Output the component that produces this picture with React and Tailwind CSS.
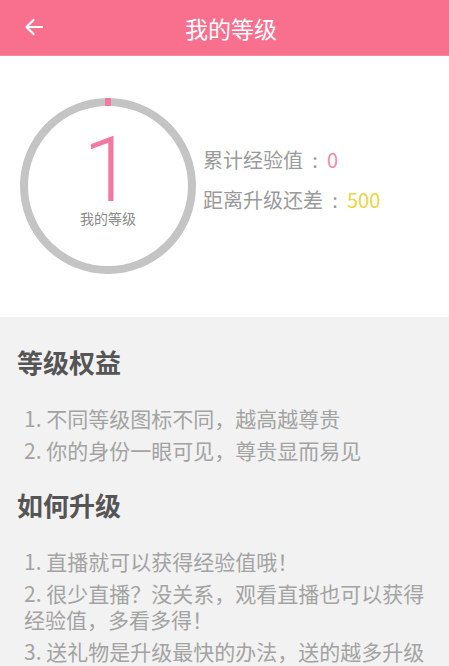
import React from "react";

const font = { fontFamily: '"Noto Sans CJK SC", "Noto Sans", sans-serif' };

function Ring() {
    return (
        <div className="relative w-[180px] h-[180px] shrink-0">
            <svg width="180" height="180" viewBox="0 0 180 180">
                <circle cx="90" cy="90" r="84" fill="none" stroke="#c4c4c4" strokeWidth="8" />
                <line x1="90" y1="2" x2="90" y2="10" stroke="#f27aa0" strokeWidth="6" />
            </svg>
            <div
                className="absolute left-0 right-0 top-[39px] text-center text-[90px] leading-[72px] font-light text-[#f27aa0]"
                style={{ fontFamily: 'Roboto, "Noto Sans", sans-serif' }}
            >
                1
            </div>
            <div className="absolute left-0 right-0 top-[113px] text-center text-[14px] leading-[18px] text-[#8a8a8a]">
                我的等级
            </div>
        </div>
    );
}

function Stat({ label, value, color }) {
    return (
        <div className="flex items-center">
            <span>{label}</span>
            <span className="inline-block w-[24px] text-center">:</span>
            <span className={color}>{value}</span>
        </div>
    );
}

function Section({ title, items }) {
    return (
        <div className="pl-[17px] pr-[20px]">
            <h2 className="text-[26px] leading-[36px] font-bold text-[#555]">{title}</h2>
            <ul className="mt-[25px] pl-[7px] flex flex-col gap-[6px]">
                {items.map((t, i) => (
                    <li key={i} className="text-[21px] leading-[26px] text-[#a3a3a3]">
                        {t}
                    </li>
                ))}
            </ul>
        </div>
    );
}

export default function App() {
    return (
        <div className="w-[449px] h-[666px] overflow-hidden bg-[#f2f2f2]" style={font}>
            <div className="h-[56px] bg-[#f9708f] flex items-center relative border-b border-[#f58aa4]">
                <svg
                    className="absolute left-[24px] top-[17px]"
                    width="20"
                    height="20"
                    viewBox="0 0 20 20"
                    fill="none"
                    stroke="#fff"
                    strokeWidth="2.2"
                    strokeLinecap="round"
                    strokeLinejoin="round"
                >
                    <path d="M18 10H2.5M9.5 3L2.5 10l7 7" />
                </svg>
                <div className="flex-1 text-center pl-[13px] text-white text-[23px] leading-[30px]">我的等级</div>
            </div>

            <div className="bg-white h-[261px] flex items-start pt-[40px] pl-[18px]">
                <Ring />
                <div className="mt-[44px] ml-[5px] text-[20px] leading-[40px] text-[#9a9a9a]">
                    <Stat label="累计经验值" value="0" color="text-[#f08aa8]" />
                    <Stat label="距离升级还差" value="500" color="text-[#e8d640]" />
                </div>
            </div>

            <div className="pt-[27px] flex flex-col gap-[24px]">
                <Section
                    title="等级权益"
                    items={["1. 不同等级图标不同，越高越尊贵", "2. 你的身份一眼可见，尊贵显而易见"]}
                />
                <Section
                    title="如何升级"
                    items={[
                        "1. 直播就可以获得经验值哦！",
                        "2. 很少直播？没关系，观看直播也可以获得经验值，多看多得！",
                        "3. 送礼物是升级最快的办法，送的越多升级越快！",
                    ]}
                />
            </div>
        </div>
    );
}
